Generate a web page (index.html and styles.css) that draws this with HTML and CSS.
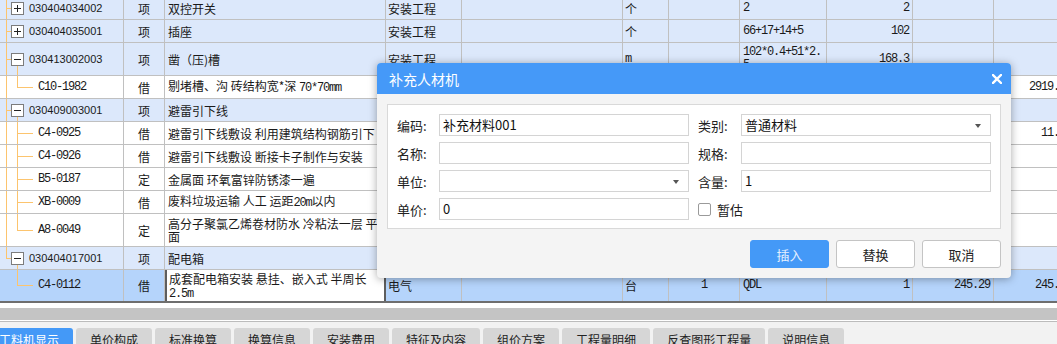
FILE: index.html
```html
<!DOCTYPE html>
<html>
<head>
	<title>补充人材机</title>
	<meta charset="utf-8"/>
	<link rel="stylesheet" href="styles.css">
</head>
<body>
	<div class="grid">
		<div class="row item">
			<div class="cell code root"><span class="fold plus"></span>030404034002</div>
			<div class="cell type">项</div>
			<div class="cell name">双控开关</div>
			<div class="cell pro">安装工程</div>
			<div class="cell"></div>
			<div class="cell unit">个</div>
			<div class="cell"></div>
			<div class="cell expr mono">2</div>
			<div class="cell qty mono">2</div>
			<div class="cell"></div>
			<div class="cell"></div>
		</div>
		<div class="row item">
			<div class="cell code root"><span class="fold plus"></span>030404035001</div>
			<div class="cell type">项</div>
			<div class="cell name">插座</div>
			<div class="cell pro">安装工程</div>
			<div class="cell"></div>
			<div class="cell unit">个</div>
			<div class="cell"></div>
			<div class="cell expr mono">66+17+14+5</div>
			<div class="cell qty mono">102</div>
			<div class="cell"></div>
			<div class="cell"></div>
		</div>
		<div class="row item tall">
			<div class="cell code root open"><span class="fold"></span>030413002003</div>
			<div class="cell type">项</div>
			<div class="cell name">凿（压)槽</div>
			<div class="cell pro">安装工程</div>
			<div class="cell"></div>
			<div class="cell unit mono">m</div>
			<div class="cell"></div>
			<div class="cell expr mono">102*0.4+51*2.5</div>
			<div class="cell qty mono">168.3</div>
			<div class="cell"></div>
			<div class="cell"></div>
		</div>
		<div class="row">
			<div class="cell code sub last mono">C10-1982</div>
			<div class="cell type">借</div>
			<div class="cell name"><span>剔堵槽、沟 砖结构宽*深 <span class="mono">70*70mm</span></span></div>
			<div class="cell pro"></div>
			<div class="cell"></div>
			<div class="cell unit"></div>
			<div class="cell"></div>
			<div class="cell expr"></div>
			<div class="cell qty"></div>
			<div class="cell"></div>
			<div class="cell qty mono">2919.71</div>
		</div>
		<div class="row item">
			<div class="cell code root open"><span class="fold"></span>030409003001</div>
			<div class="cell type">项</div>
			<div class="cell name">避雷引下线</div>
			<div class="cell pro"></div>
			<div class="cell"></div>
			<div class="cell unit"></div>
			<div class="cell"></div>
			<div class="cell expr"></div>
			<div class="cell qty"></div>
			<div class="cell"></div>
			<div class="cell"></div>
		</div>
		<div class="row">
			<div class="cell code sub mono">C4-0925</div>
			<div class="cell type">借</div>
			<div class="cell name">避雷引下线敷设 利用建筑结构钢筋引下</div>
			<div class="cell pro"></div>
			<div class="cell"></div>
			<div class="cell unit"></div>
			<div class="cell"></div>
			<div class="cell expr"></div>
			<div class="cell qty"></div>
			<div class="cell"></div>
			<div class="cell qty mono">11.49</div>
		</div>
		<div class="row">
			<div class="cell code sub mono">C4-0926</div>
			<div class="cell type">借</div>
			<div class="cell name">避雷引下线敷设 断接卡子制作与安装</div>
			<div class="cell pro"></div>
			<div class="cell"></div>
			<div class="cell unit"></div>
			<div class="cell"></div>
			<div class="cell expr"></div>
			<div class="cell qty"></div>
			<div class="cell"></div>
			<div class="cell"></div>
		</div>
		<div class="row">
			<div class="cell code sub mono">B5-0187</div>
			<div class="cell type">定</div>
			<div class="cell name">金属面 环氧富锌防锈漆一遍</div>
			<div class="cell pro"></div>
			<div class="cell"></div>
			<div class="cell unit"></div>
			<div class="cell"></div>
			<div class="cell expr"></div>
			<div class="cell qty"></div>
			<div class="cell"></div>
			<div class="cell"></div>
		</div>
		<div class="row">
			<div class="cell code sub mono">XB-0009</div>
			<div class="cell type">借</div>
			<div class="cell name"><span>废料垃圾运输 人工 运距<span class="mono">20m</span>以内</span></div>
			<div class="cell pro"></div>
			<div class="cell"></div>
			<div class="cell unit"></div>
			<div class="cell"></div>
			<div class="cell expr"></div>
			<div class="cell qty"></div>
			<div class="cell"></div>
			<div class="cell"></div>
		</div>
		<div class="row tall">
			<div class="cell code sub last mono">A8-0049</div>
			<div class="cell type">定</div>
			<div class="cell name">高分子聚氯乙烯卷材防水 冷粘法一层 平面</div>
			<div class="cell pro"></div>
			<div class="cell"></div>
			<div class="cell unit"></div>
			<div class="cell"></div>
			<div class="cell expr"></div>
			<div class="cell qty"></div>
			<div class="cell"></div>
			<div class="cell"></div>
		</div>
		<div class="row item">
			<div class="cell code root open last"><span class="fold"></span>030404017001</div>
			<div class="cell type">项</div>
			<div class="cell name">配电箱</div>
			<div class="cell pro"></div>
			<div class="cell"></div>
			<div class="cell unit"></div>
			<div class="cell"></div>
			<div class="cell expr"></div>
			<div class="cell qty"></div>
			<div class="cell"></div>
			<div class="cell"></div>
		</div>
		<div class="row tall selected">
			<div class="cell code sub end mono">C4-0112</div>
			<div class="cell type">借</div>
			<div class="cell name edit">成套配电箱安装 悬挂、嵌入式 半周长<br><span class="mono">2.5m</span></div>
			<div class="cell pro">电气</div>
			<div class="cell"></div>
			<div class="cell unit">台</div>
			<div class="cell coef mono">1</div>
			<div class="cell expr mono">QDL</div>
			<div class="cell qty mono">1</div>
			<div class="cell qty mono">245.29</div>
			<div class="cell qty mono">245.29</div>
		</div>
	</div>

	<div class="hscroll"></div>

	<div class="tabbar">
		<span class="tab active">工料机显示</span>
		<span class="tab">单价构成</span>
		<span class="tab">标准换算</span>
		<span class="tab">换算信息</span>
		<span class="tab">安装费用</span>
		<span class="tab">特征及内容</span>
		<span class="tab">组价方案</span>
		<span class="tab">工程量明细</span>
		<span class="tab">反查图形工程量</span>
		<span class="tab">说明信息</span>
	</div>

	<div class="dialog">
		<div class="dialog-title">
			<span>补充人材机</span>
			<svg class="close" width="10" height="10" viewBox="0 0 10 10">
				<path d="M1 1L9 9M9 1L1 9" stroke="#fff" stroke-width="2.4" stroke-linecap="square"/>
			</svg>
		</div>
		<div class="dialog-body">
			<div class="panel">
				<span class="label">编码:</span>
				<div class="input">补充材料001</div>
				<span class="label second">类别:</span>
				<div class="input select">普通材料</div>

				<span class="label">名称:</span>
				<div class="input"></div>
				<span class="label second">规格:</span>
				<div class="input"></div>

				<span class="label">单位:</span>
				<div class="input select"></div>
				<span class="label second">含量:</span>
				<div class="input">1</div>

				<span class="label">单价:</span>
				<div class="input">0</div>
				<label class="check"><span class="checkbox"></span>暂估</label>
			</div>
			<div class="buttons">
				<button class="btn primary">插入</button>
				<button class="btn">替换</button>
				<button class="btn">取消</button>
			</div>
		</div>
	</div>
</body>
</html>
```

FILE: styles.css
```css
*{
	box-sizing: border-box;
}
body{
	margin: 0;
	overflow: hidden;
	background-color: #fff;
	font-family: "Noto Sans CJK SC", sans-serif;
	font-size: 12px;
	color: #1a1a1a;
}
.mono{
	font-family: "Liberation Mono", "Noto Sans CJK SC", monospace;
	font-size: 12px;
	letter-spacing: -1.2px;
}

/* grid */
.grid{
	width: 1074px;
	margin-top: -3px;
}
.row{
	display: grid;
	grid-template-columns: 124px 41px 221px 76px 161px 46px 71px 87px 86px 81px 81px;
	height: 23px;
	border-bottom: 1px solid #c0c0c0;
	background-color: #fff;
}
.row.tall{
	height: 33px;
}
.row.item{
	background-color: #dce8fb;
}
.row.selected{
	background-color: #b5d4fb;
	border-bottom: 2px solid #6e6e6e;
}
.cell{
	display: flex;
	align-items: center;
	border-right: 1px solid #c0c0c0;
	overflow: hidden;
	line-height: 13px;
	padding: 0 3px;
}
.type{
	justify-content: center;
}
.name{
	padding-left: 3px;
}
.name.edit{
	display: block;
	background-color: #fff;
	border-left: 2px solid #5e5e5e;
	border-right: 2px solid #5e5e5e;
	padding: 2px 2px 0;
}
.pro{
	padding-left: 2px;
}
.unit{
	padding-left: 2px;
}
.coef{
	justify-content: center;
}
.expr{
	word-break: break-all;
}
.qty{
	justify-content: flex-end;
	padding-right: 3px;
}

/* tree lines */
.code{
	padding: 0;
	font-family: "Liberation Sans", sans-serif;
	font-size: 11px;
	--ln: #fcc46e;
}
.code.mono{
	font-family: "Liberation Mono", monospace;
	font-size: 12px;
}
.code.root{
	background: linear-gradient(var(--ln), var(--ln)) 6px 0 / 1px 100% no-repeat,
		linear-gradient(var(--ln), var(--ln)) 6px 50% / 5px 1px no-repeat;
}
.code.root.open{
	background: linear-gradient(var(--ln), var(--ln)) 6px 0 / 1px 100% no-repeat,
		linear-gradient(var(--ln), var(--ln)) 6px 50% / 5px 1px no-repeat,
		linear-gradient(var(--ln), var(--ln)) 17px 100% / 1px 50% no-repeat;
}
.code.root.open.last{
	background: linear-gradient(var(--ln), var(--ln)) 6px 0 / 1px 50% no-repeat,
		linear-gradient(var(--ln), var(--ln)) 6px 50% / 5px 1px no-repeat,
		linear-gradient(var(--ln), var(--ln)) 17px 100% / 1px 50% no-repeat;
}
.code.sub{
	padding-left: 38px;
	background: linear-gradient(var(--ln), var(--ln)) 6px 0 / 1px 100% no-repeat,
		linear-gradient(var(--ln), var(--ln)) 17px 0 / 1px 100% no-repeat,
		linear-gradient(var(--ln), var(--ln)) 17px 50% / 16px 1px no-repeat;
}
.code.sub.last{
	background: linear-gradient(var(--ln), var(--ln)) 6px 0 / 1px 100% no-repeat,
		linear-gradient(var(--ln), var(--ln)) 17px 0 / 1px 50% no-repeat,
		linear-gradient(var(--ln), var(--ln)) 17px 50% / 16px 1px no-repeat;
}
.code.sub.end{
	background: linear-gradient(var(--ln), var(--ln)) 17px 0 / 1px 50% no-repeat,
		linear-gradient(var(--ln), var(--ln)) 17px 50% / 16px 1px no-repeat;
}
.fold{
	display: inline-block;
	width: 13px;
	height: 13px;
	margin: 0 5px 0 11px;
	border: 1px solid #7c7c7c;
	background: linear-gradient(#222, #222) center / 7px 1px no-repeat, #fff;
}
.fold.plus{
	background: linear-gradient(#222, #222) center / 7px 1px no-repeat,
		linear-gradient(#222, #222) center / 1px 7px no-repeat, #fff;
}

/* bottom */
.hscroll{
	height: 12px;
	margin-top: 5px;
	background-color: #c4c4c4;
}
.tabbar{
	display: flex;
	gap: 3px;
	margin-top: 1px;
	border-top: 1px solid #bcbcbc;
	background-color: #f2f2f2;
	padding-top: 6px;
	margin-left: -15px;
	height: 40px;
}
.tab{
	height: 24px;
	padding: 3px 14px 0;
	background-color: #d6d6d6;
	border-radius: 3px 3px 0 0;
	color: #222;
	white-space: nowrap;
}
.tab.active{
	background-color: #4499f7;
	color: #fff;
}

/* dialog */
.dialog{
	position: absolute;
	left: 377px;
	top: 63px;
	width: 634px;
	height: 215px;
	background-color: #f4f4f4;
	border-radius: 4px;
	box-shadow: 0 1px 9px rgba(0,0,0,0.35);
	overflow: hidden;
}
.dialog-title{
	display: flex;
	align-items: center;
	justify-content: space-between;
	height: 31px;
	padding: 0 9px 0 12px;
	background-color: #4599f8;
	color: #fff;
	font-size: 14px;
}
.close{
	display: block;
}
.dialog-body{
	padding: 10px;
}
.panel{
	display: grid;
	grid-template-columns: 42px 250px 52px 250px;
	grid-auto-rows: 22px;
	row-gap: 6px;
	align-items: center;
	padding: 9px;
	height: 125px;
	background-color: #fff;
	border: 1px solid #d9d9d9;
	font-size: 13px;
}
.label{
	color: #222;
}
.label.second{
	padding-left: 9px;
}
.input{
	height: 22px;
	line-height: 20px;
	padding-left: 3px;
	border: 1px solid #d4d4d4;
	background-color: #fff;
	color: #111;
	position: relative;
}
.input.select::after{
	content: "";
	position: absolute;
	right: 9px;
	top: 9px;
	border-left: 3.5px solid transparent;
	border-right: 3.5px solid transparent;
	border-top: 4px solid #555;
}
.check{
	display: flex;
	align-items: center;
	gap: 6px;
	grid-column: 3 / 5;
	padding-left: 9px;
	color: #222;
}
.checkbox{
	width: 13px;
	height: 13px;
	border: 1px solid #9a9a9a;
	border-radius: 2px;
	background-color: #fff;
}
.buttons{
	display: flex;
	justify-content: flex-end;
	gap: 7px;
	margin-top: 11px;
}
.btn{
	width: 79px;
	height: 28px;
	border: 1px solid #c4c4c4;
	border-radius: 3px;
	background-color: #fff;
	font-family: "Noto Sans CJK SC", sans-serif;
	font-size: 13px;
	color: #222;
	padding: 0;
}
.btn.primary{
	background-color: #4499f7;
	border-color: #4499f7;
	color: #e6f0ff;
}
```
